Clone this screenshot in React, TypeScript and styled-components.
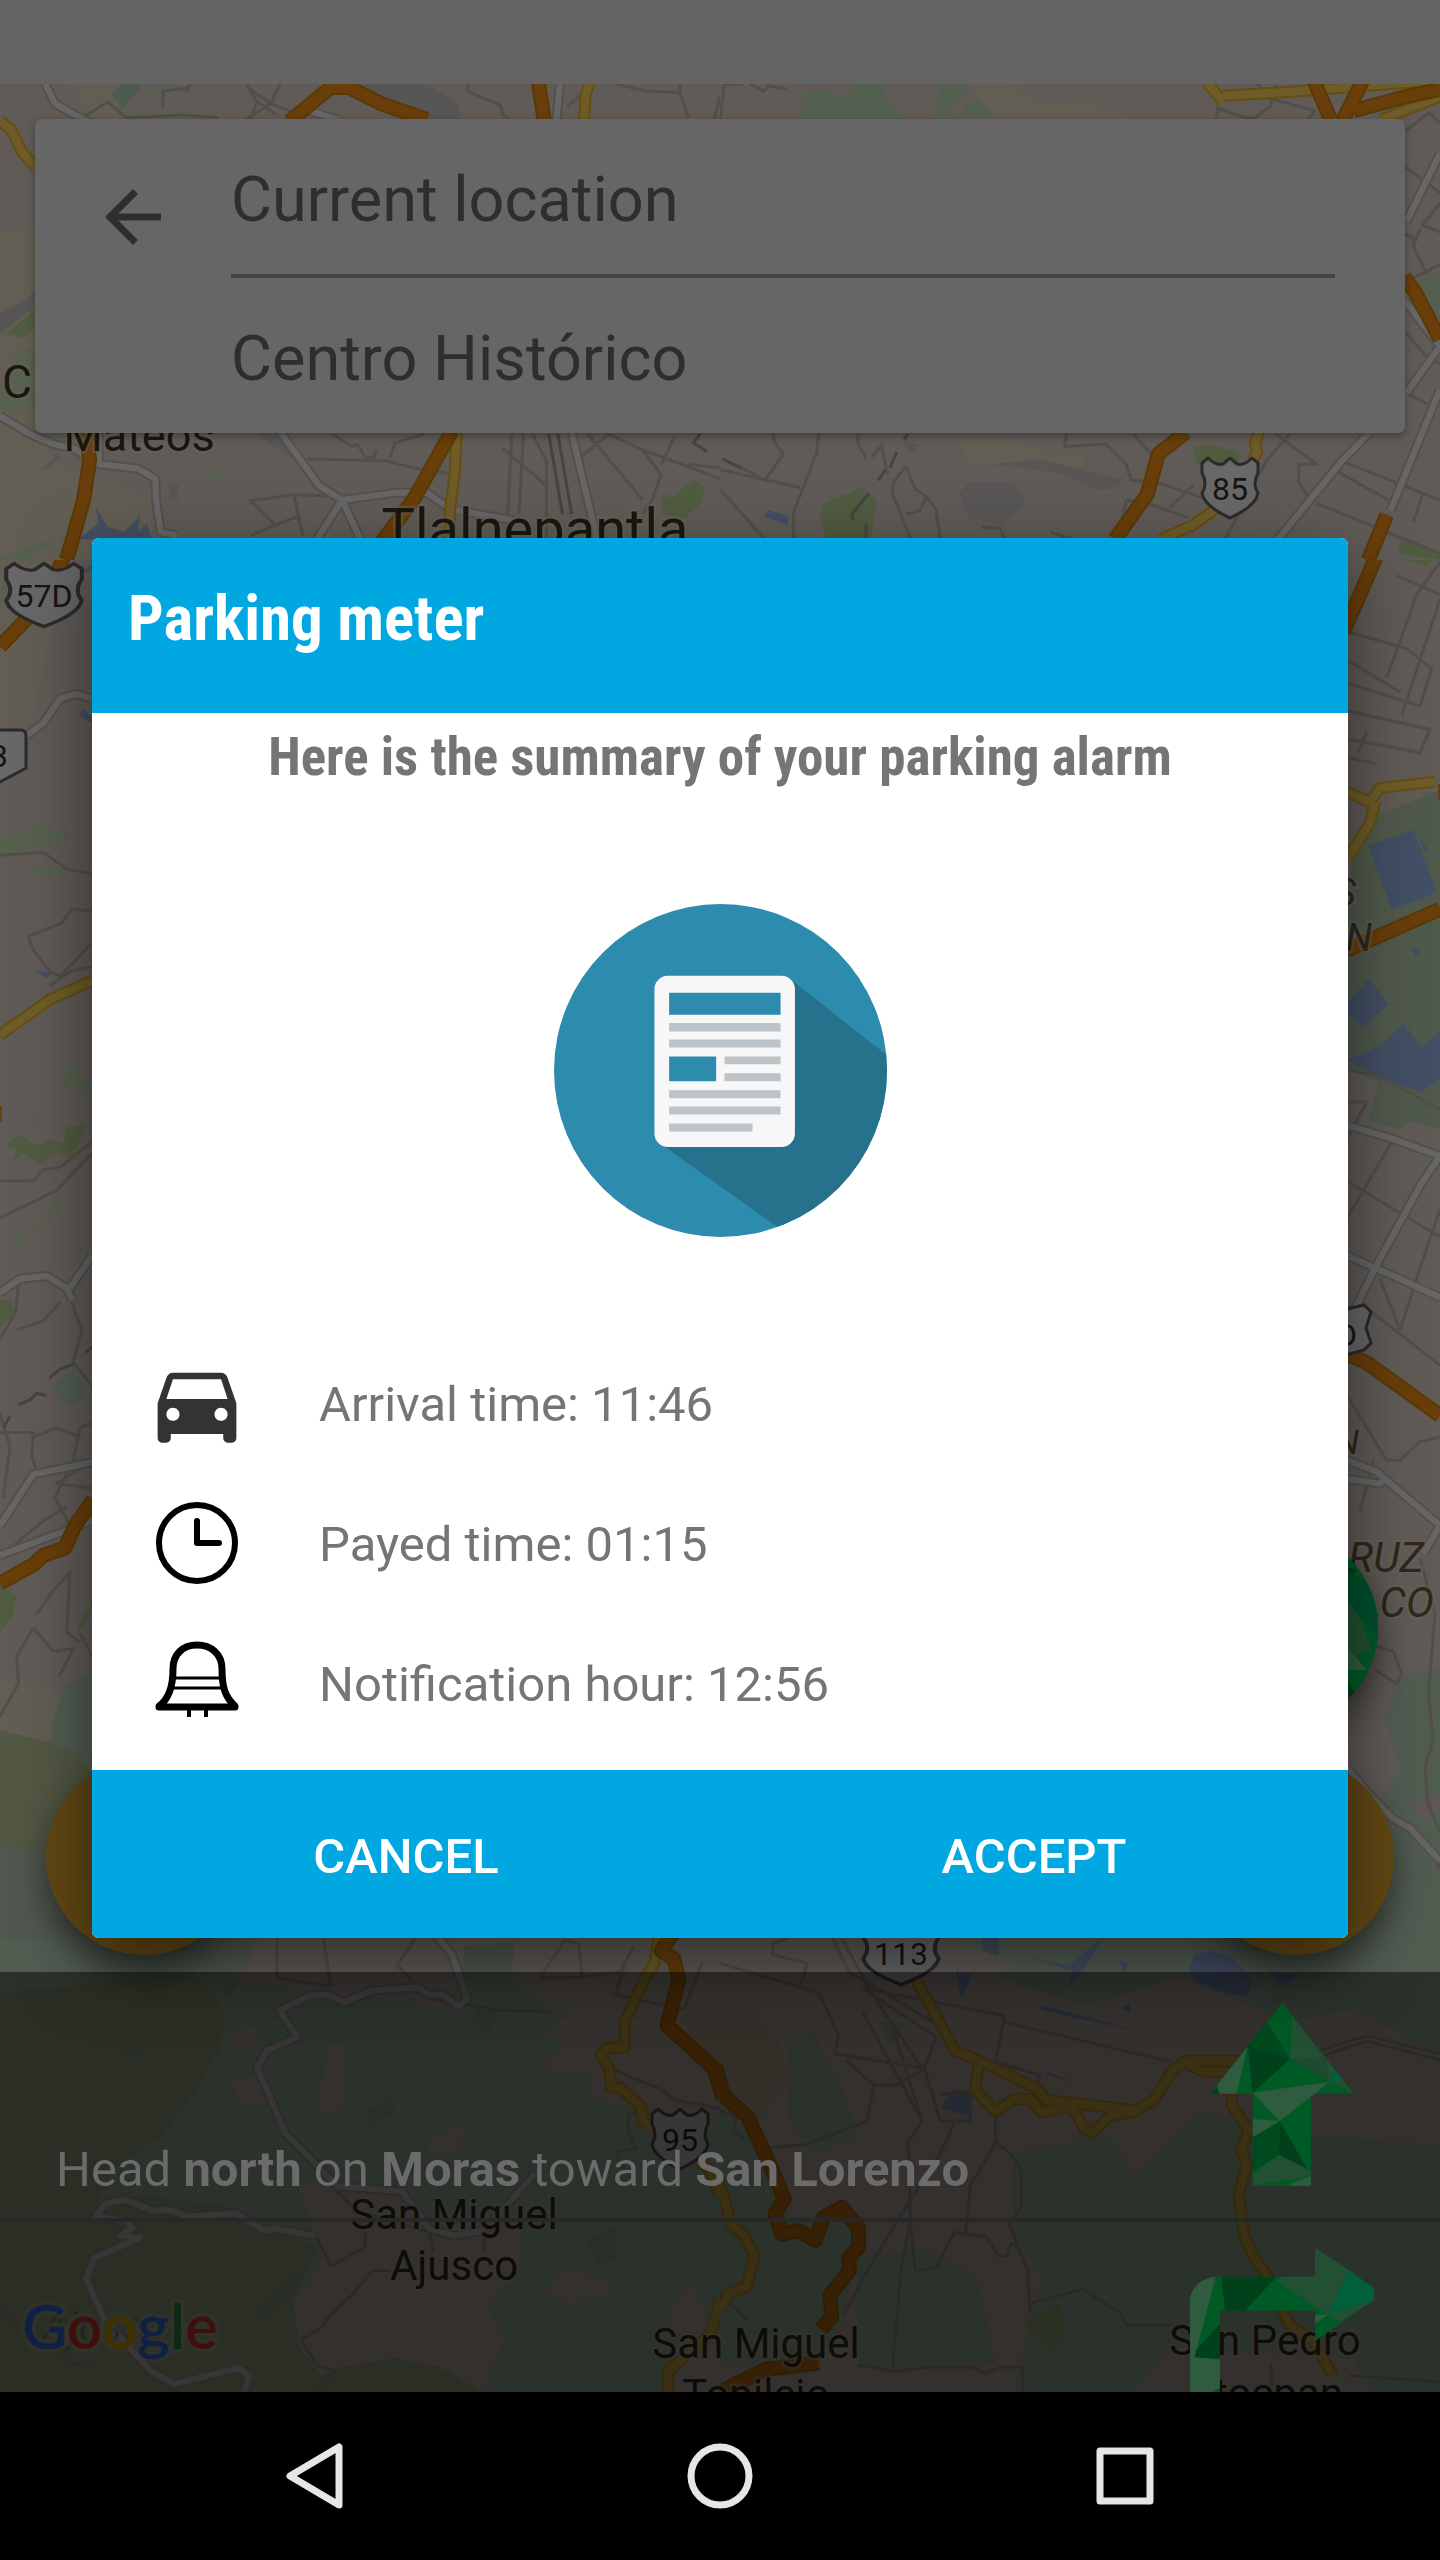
import React from "react";
import styled, { createGlobalStyle } from "styled-components";

const GlobalStyle = createGlobalStyle`
  *, *::before, *::after { box-sizing: border-box; }
  body { margin: 0; background: #000; font-family: Roboto, "Noto Sans", sans-serif; }
  button, input { font: inherit; border: 0; background: none; padding: 0; margin: 0; border-radius: 0; }
  button { cursor: pointer; }
  svg { display: block; }
`;

/* ---------- layout ---------- */

const Screen = styled.div`
  position: relative;
  display: flex;
  flex-direction: column;
  min-height: 100vh;
  overflow: hidden;
  background: #605b57;
`;

const MapLayer = styled.div`
  position: absolute;
  inset: 0;
  svg.map { width: 100%; height: auto; }
`;

const StatusBar = styled.div`
  position: relative;
  height: 84px;
  background: #646464;
`;

const SearchCard = styled.form`
  position: relative;
  display: flex;
  align-items: flex-start;
  margin: 35px;
  padding-right: 70px;
  border-radius: 7px;
  background: #666;
  box-shadow: 0 3px 9px rgba(0, 0, 0, 0.35);
`;

const BackButton = styled.button`
  flex: none;
  display: grid;
  place-items: center;
  width: 196px;
  height: 196px;
  svg { width: 84px; height: 84px; fill: #2e2e2e; }
`;

const Fields = styled.div`
  flex: 1;
  min-width: 0;
`;

const Field = styled.input<{ $ruled?: boolean }>`
  display: block;
  width: 100%;
  box-sizing: content-box;
  height: 76px;
  padding: 43px 0 36px;
  font-size: 63px;
  line-height: 76px;
  color: #2e2e2e;
  outline: none;
  ${(p) => p.$ruled && "border-bottom: 4px solid #444;"}
`;

const Actions = styled.div`
  position: relative;
  display: flex;
  flex-wrap: wrap;
  justify-content: space-between;
  row-gap: 33px;
  margin-top: auto;
  padding: 0 46px 17px;
`;

const GreenRow = styled.div`
  display: flex;
  justify-content: flex-end;
  width: 100%;
  padding-right: 16px;
`;

const Fab = styled.button<{ $color: string }>`
  width: 196px;
  height: 196px;
  border-radius: 50%;
  overflow: hidden;
  background: ${(p) => p.$color};
  box-shadow: 0 16px 32px rgba(0, 0, 0, 0.45);
  svg { width: 100%; height: 100%; }
`;

const Directions = styled.ol`
  position: relative;
  height: 420px;
  margin: 0;
  padding: 0;
  overflow: hidden;
  list-style: none;
  background: rgba(0, 0, 0, 0.47);
`;

const Step = styled.li`
  display: flex;
  align-items: flex-end;
  justify-content: space-between;
  height: 250px;
  padding: 0 66px 20px 56px;
  border-bottom: 4px solid #272727;
  font-size: 49px;
  line-height: 56px;
  color: #6b6b6b;
`;

const NextStep = styled(Step)`
  align-items: flex-start;
  justify-content: flex-end;
  padding-top: 26px;
  border: 0;
`;

const StepIcon = styled.div`
  display: flex;
  justify-content: center;
  width: 184px;
  padding-bottom: 12px;
`;

const NavBar = styled.nav`
  position: relative;
  display: flex;
  justify-content: center;
  height: 168px;
  background: #000;
`;

const NavButton = styled.button`
  display: grid;
  place-items: center;
  width: 405px;
  svg { width: 72px; height: 72px; fill: none; stroke: #e6e6e6; stroke-width: 7; stroke-linejoin: round; }
`;

/* ---------- dialog ---------- */

const Overlay = styled.div`
  position: absolute;
  inset: 84px 0 168px;
  display: grid;
  place-items: center;
`;

const Dialog = styled.section`
  display: flex;
  flex-direction: column;
  width: calc(100% - 184px);
  border-radius: 7px;
  overflow: hidden;
  background: #fff;
  box-shadow: 0 24px 70px rgba(0, 0, 0, 0.5);
`;

const DialogTitle = styled.h1`
  margin: 0;
  padding: 41px 36px 54px;
  background: #00a7e1;
  color: #fff;
  font-family: "Roboto Condensed", "Liberation Sans Narrow", Roboto, sans-serif;
  font-size: 63px;
  font-weight: 700;
  line-height: 80px;
`;

const Summary = styled.p`
  margin: 0;
  padding-top: 12px;
  text-align: center;
  color: #757575;
  font-family: "Roboto Condensed", "Liberation Sans Narrow", Roboto, sans-serif;
  font-size: 53px;
  font-weight: 700;
  line-height: 64px;
`;

const Badge = styled.div`
  display: flex;
  justify-content: center;
  padding: 115px 0 98px;
  svg { width: 333px; height: 333px; }
`;

const Details = styled.ul`
  margin: 0;
  padding: 0 63px 15px;
  list-style: none;
`;

const Detail = styled.li`
  display: flex;
  align-items: center;
  gap: 80px;
  height: 140px;
  color: #757575;
  font-size: 49px;
  line-height: 56px;
  svg { flex: none; width: 84px; height: 84px; overflow: visible; }
`;

const DialogActions = styled.footer`
  display: flex;
  background: #00a7e1;
`;

const DialogButton = styled.button`
  flex: 1;
  height: 168px;
  padding-top: 4px;
  color: #fff;
  font-size: 49px;
  font-weight: 500;
`;

/* ---------- map ---------- */

const roadStyle = {
  minor: { edge: "#524f4a", fill: "#524f4a", width: 3 },
  white: { edge: "#54514c", fill: "#666666", width: 10 },
  yellow: { edge: "#664e12", fill: "#6e5d28", width: 12 },
  orange: { edge: "#5a3a04", fill: "#693e0a", width: 15 },
  rail: { edge: "#444", fill: "#444", width: 3 },
};

type RoadKind = keyof typeof roadStyle;

interface TileData {
  x: number;
  y: number;
  w: number;
  h: number;
  box: string;
  areas: [string, string][];
  roads: [RoadKind, string][];
}

const forest = "#525d52";
const meadow = "#525844";
const park = "#505c40";
const water = "#434f64";
const stone = "#585655";
const land = "#605b57";
const sand = "#635e54";

const tiles: TileData[] = [
  {
    x: 0, y: 0, w: 720, h: 560, box: "0 0 1568 1568",
    areas: [
      [sand, "M0 650L80 640V1200L120 1290L330 1400V1568H0Z M150 230L270 235L260 335H200Z"],
      ["#4d5c4f", "M265 235H312L268 305L243 268Z"],
      ["#58604f", "M335 235H370L310 280Z M0 1080L40 970L76 980V1150L0 1150Z M450 1330L473 1305V1340L458 1362Z"],
      [stone, "M780 235H930L1000 290V335H880L800 290Z M0 880L76 820V860L0 935Z M368 1355H388V1400H368Z M95 1310L125 1270L130 1285L105 1315Z M560 1215H600L640 1290Z"],
      [park, "M15 935L76 865V920L50 945Z M1445 1380L1460 1395L1510 1345L1533 1365L1530 1405L1490 1450L1440 1440Z"],
      [water, "M170 1510L215 1465L208 1420L235 1475L270 1490L305 1445L300 1490L320 1465L330 1510Z"],
      ["#56604f", "M0 1568L60 1530L115 1510L110 1530L70 1550L60 1568Z"],
    ],
    roads: [
      ["minor", "M180 330L235 285L275 330L400 322L475 330 M355 300L355 255L415 245 M415 235L405 260 M535 235L560 285L545 335 M610 235L590 290L535 335 M545 250L590 290L660 325 M560 285L600 320 M1020 235L1018 255L1090 295L1095 320L1110 335 M1340 235L1410 255L1480 260V235 M1480 260L1500 330 M1568 270L1555 335 M1235 300L1290 235"],
      ["minor", "M725 1215L765 1250L780 1245L795 1282L815 1278L820 1260 M670 1285L840 1290L900 1310L975 1325 M850 1280L860 1240L925 1215 M1115 1215L1105 1450 M1140 1215L1130 1440 M640 1385L545 1402L600 1470L650 1445L640 1385 M650 1445L660 1500 M600 1470L545 1500 M1095 1255L1190 1360V1510 M1160 1215L1190 1290V1360 M1280 1215L1400 1400 M1265 1280L1325 1215L1400 1260L1568 1340 M1400 1260L1440 1330L1420 1400L1400 1440 M1500 1300L1568 1310 M1470 1220L1440 1300 M750 1390L640 1385"],
      ["rail", "M1195 1215L1225 1440 M1215 1215L1245 1440 M1525 1215L1510 1240L1540 1265"],
      ["white", "M95 225L120 290L175 330L200 345 M1220 225L1212 335 M650 300L735 335 M0 1165L65 1215L120 1245L160 1255L215 1300L300 1312L338 1340L340 1400L350 1490L385 1500 M215 1300V1205 M605 1200L695 1360L745 1400L860 1380L930 1380L980 1425L1130 1460 M745 1400L690 1510 M745 1400L785 1510 M1243 1200L1300 1510"],
      ["yellow", "M0 338L25 365L50 430L80 470 M1285 225L1275 270L1272 335 M995 1205L990 1330L980 1430V1510"],
      ["orange", "M630 340L720 245H760L830 290L930 335 M1172 225L1185 335 M190 1205L195 1290L182 1400L145 1568 M985 1205L900 1400L830 1520"],
    ],
  },
  {
    x: 720, y: 0, w: 720, h: 560, box: "0 0 1568 1568",
    areas: [
      ["#54604f", "M180 262L205 248L240 262L285 270V235H355L358 265L402 335H180Z M480 240H545L490 335H465Z M530 290L570 280L610 330H530Z M700 325L725 280L738 295L730 330Z"],
      [sand, "M540 235H640L690 290L830 295L900 335H600Z M520 1230L605 1220L700 1260L800 1260L790 1310L540 1300Z"],
      ["#54604f", "M1515 790L1568 760V900Z"],
      [park, "M1030 1255L1060 1243L1130 1265V1300H1040Z M225 1410L310 1365L340 1400L330 1510H230L218 1450Z M1485 1510L1568 1550V1568L1475 1550Z"],
      [stone, "M520 1380L545 1350L640 1350L665 1410L610 1470L540 1450Z M590 1300L700 1285L800 1320L870 1340L883 1320L870 1360L830 1375L740 1325Z M395 1235L435 1245L415 1270Z"],
      [water, "M105 1427L148 1445V1470L95 1447Z"],
    ],
    roads: [
      ["minor", "M0 335L10 235H50 M65 235L95 255L105 240L145 250 M1080 335L1085 305L1145 330H1165L1200 295L1210 235 M1170 235L1195 275L1295 310L1280 335 M1495 365L1545 315L1568 345 M1490 465L1568 540 M1568 570L1530 630L1568 650 M1510 690L1540 770 M1490 655L1510 665V690L1525 640 M1500 785L1568 740 M1490 925L1540 1000L1568 1020 M1500 1105L1540 1130 M1145 330L1080 300"],
      ["minor", "M215 1215L210 1270L160 1435V1510 M115 1215L120 1240L138 1270L98 1345L40 1305 M0 1315L175 1365 M300 1215V1240L318 1285 M330 1280L352 1248L365 1330 M405 1305L378 1350L375 1380L415 1510 M405 1305L425 1370L450 1390L470 1425L480 1510 M450 1390L435 1430L405 1440 M0 1370L98 1510 M755 1215L750 1250L840 1243L885 1300L895 1345L950 1350L1090 1410 M900 1215L945 1280 M885 1400L945 1415L1020 1450 M885 1400L865 1510 M980 1420L1030 1360 M570 1475L610 1480L620 1510 M720 1490L770 1510 M1240 1215L1190 1290L1130 1430 M1210 1215L1300 1300L1260 1300V1350L1280 1390L1345 1320L1455 1400 M1350 1290L1480 1355L1568 1400 M1300 1410L1568 1550 M1530 1385L1510 1460 M1150 1390L1100 1510"],
      ["rail", "M5 1285L45 1310 M410 1215L400 1230 M385 1265L370 1310 M360 1315L345 1345 M325 1380L287 1440L290 1455 M318 1468V1505"],
      ["white", "M1568 430L1495 620 M1490 840L1568 970L1495 1100 M1568 1090L1460 1430 M1415 1210L1355 1290L1215 1510"],
      ["yellow", "M1060 230L1095 285 M1095 268L1230 258L1568 225 M1440 335L1568 270 M1175 1205L1165 1240L1170 1265L1160 1290 M1085 1420L1030 1470L960 1510"],
      ["orange", "M1293 225L1330 335 M1400 225L1355 340 M1380 310L1480 275L1568 250 M1490 775L1515 820L1568 950 M1015 1210L955 1270L930 1385L860 1510 M1452 1442L1412 1568"],
    ],
  },
  {
    x: 0, y: 560, w: 100, h: 1378, box: "0 43 300 1480",
    areas: [
      [sand, "M0 40L200 40L100 210L0 260Z M0 1240L180 1260L300 1240V1480H0Z"],
      ["#55604d", "M0 340L90 335L130 320L140 333L210 332L200 345L110 352L0 360Z M90 375L150 372L210 382L100 380Z M180 595L235 583L240 600L265 603L275 625L230 605L190 612Z M65 645L130 638L110 650Z M25 790L60 770L45 763L80 766L190 730L170 742L90 765L55 785Z M0 75L50 50L60 65L0 92Z"],
      [park, "M15 672L55 660L115 672L150 665L190 670L200 652L260 650L215 685L170 678L120 692L70 680L30 692L50 677Z M0 838H30L50 852L0 866Z M0 1145L50 1155L40 1175L0 1195Z M230 1190L276 1160V1172L235 1196Z"],
      [forest, "M150 930L215 913L265 930L240 948L200 952Z M160 1290L190 1255L276 1235V1340L150 1320Z"],
      [meadow, "M0 1300L140 1312L240 1325L300 1360V1450L0 1425Z"],
      ["#525850", "M0 1425L300 1440V1523H0Z"],
      [water, "M235 210L250 203L276 212V218Z M108 485L160 486L140 492Z M240 58L276 48V54Z"],
    ],
    roads: [
      ["minor", "M0 360L130 357L200 375L276 380 M276 420L215 418L185 433L85 447L100 462L150 485L180 490L276 455 M276 480L210 485L150 500 M0 710H100L130 698L180 695L276 668 M0 750L170 720L276 680 M55 820L48 850L0 880 M200 825L245 870L220 905L276 930 M180 840L130 860L50 870 M0 980H100L95 1005L110 1022 M0 960L30 995L10 1050 M276 970L240 975L220 1010L165 1050L210 1080 M100 985L170 975L240 985 M276 1040L170 1035L276 1010 M45 1100L130 1075L200 1060 M110 1175L160 1150L210 1130L200 1195L240 1205 M100 1190L50 1220L55 1250L0 1285 M100 1190L160 1215L220 1212L176 1243 M276 1220L240 1195"],
      ["rail", "M10 975L30 963 M55 950L90 945L110 938L138 940 M148 922L180 912L220 907 M258 894L276 888"],
      ["white", "M80 232L130 218L180 192L230 187L276 192 M0 830L60 815L140 812L200 825L218 838 M210 825L276 790 M0 1080L100 1025L276 1012 M0 1112L276 1075"],
      ["yellow", "M0 553L150 515L276 495"],
      ["orange", "M240 -10L190 40L150 80L0 136 M280 1052L225 1080L195 1104L130 1112L100 1122L0 1142 M0 638H4"],
    ],
  },
  {
    x: 1300, y: 560, w: 140, h: 1378, box: "0 43 420 1480",
    areas: [
      ["#505a4c", "M141 385L210 320L420 290V635L141 588Z M205 645L235 605L420 630V655L330 645L300 655Z"],
      [water, "M205 350L340 333L410 400L275 418Z M141 520L207 492L265 520L190 545L141 530Z M141 580L240 565L310 541L365 565L390 560L420 548V600L365 615L240 600Z M355 337L385 355L375 358Z M335 458L365 463L345 470Z"],
      [forest, "M250 1285L310 1240L420 1235V1523H141V1505L270 1480L200 1400L300 1340Z"],
      [park, "M295 28L400 43L380 50L290 40Z"],
      ["#5d5854", "M330 1380L420 1365V1385L380 1400Z"],
    ],
    roads: [
      ["minor", "M141 120L320 138L395 160L360 200L141 175 M420 85L305 210 M260 170L350 80L420 45 M141 150L300 185 M141 205L390 225L360 250L141 235 M200 228L175 250 M141 255L230 262 M290 60L420 80 M141 590L240 598L420 633 M141 625L200 625L141 665 M275 668L141 750 M141 710L420 770 M141 845L220 852L420 908 M300 870L345 820L420 740 M240 815L300 870 M141 940L260 1010L300 1010L360 990L420 985 M180 1065L220 1010 M360 1115L405 1175L385 1260L400 1310L375 1340L385 1380L420 1410 M190 1205L280 1215L305 1240L290 1250L225 1235 M141 1375L260 1395L380 1420L420 1450"],
      ["white", "M141 650L280 665L420 683 M420 683L360 715L230 800L141 865 M141 790L280 812L420 835 M141 1010L230 1022L255 1030L240 1035L141 1030 M255 1030L420 1080L370 1110 M141 1340L210 1370L280 1395L330 1405L420 1440"],
      ["yellow", "M141 292L210 303L240 288L405 281 M141 365L210 325L225 303"],
      ["orange", "M130 120L180 80L275 0 M141 462L420 418 M141 896L200 905L420 962 M415 292H425"],
    ],
  },
  {
    x: 0, y: 1938, w: 720, h: 454, box: "0 90 1568 1079",
    areas: [
      [forest, "M0 90H1568V1169H0Z"],
      [meadow, "M0 220L200 200L420 170L490 260L480 350L430 450L350 560L250 640L200 740L300 700L500 730L690 830L640 950L650 1050L740 1110L860 1088L960 1110L1050 1169H0Z"],
      [land, "M560 90H1568V510L1440 520L1290 470L1285 420L1170 400L1230 340L1190 320L1240 270L1130 210L1110 140L1010 130L1000 200L950 270L880 220L740 240L600 200L500 200L540 150Z M500 430L560 420L580 480L530 500Z M490 320L560 300L560 350L510 360Z M715 340L755 340V430L745 490L715 510L690 490Z M650 680L700 650L780 700L900 670L900 760L1140 740L1130 880L1060 960L1100 1040L1050 1169L960 1110L860 1088L740 1110L700 1130L650 1060L640 960L700 850Z M930 570L990 530L1020 540L1000 590L930 620Z M1200 910L1240 870L1330 910L1320 940L1240 960L1190 930Z M1480 940L1500 900L1530 950L1540 1000L1568 1050V1169H1440L1490 1040L1450 1000Z M1135 1050L1150 1030L1165 1055Z"],
      ["#62584f", "M1480 270L1568 250V400L1540 390Z"],
      ["#4e5a4c", "M1010 110L1120 100L1110 200H1010Z M1090 270L1040 255L1030 290L1060 325Z M1280 810L1340 780V850L1300 870Z M800 500L850 465L860 500L810 540Z"],
      ["#4b5344", "M560 980L660 880L640 940L580 990Z M480 210L520 190L500 230Z M260 370L330 320L300 370Z"],
    ],
    roads: [
      ["minor", "M603 90V185L720 205 M705 90L720 205 M905 90L865 155L935 235L1090 262L1200 265 M1230 95L1175 185L1268 183L1260 105Z M1268 183L1350 170L1380 110 M1340 225L1365 140 M1340 225L1490 260L1530 145 M1340 405L1440 450L1470 475L1568 495 M1420 508H1368V550L1385 590L1340 600L1360 640 M730 690L780 740L935 790L945 840 M720 870L795 825V790 M690 800L720 870 M850 880H810L770 935L720 985L700 1015L655 1045L690 1105L730 1120L690 1160 M1055 840V800 M0 975L160 1100L200 1110"],
      ["white", "M948 80L985 130L1018 235L998 252L965 225H935L908 207L810 215L750 243L715 225L675 227L608 262L648 325L582 357L560 398L622 555L735 680L875 692L935 780L990 798L1055 785L1165 650 M683 798L600 780L575 785L515 745L410 752L365 735L335 738L270 712L228 722L210 752L278 763L288 780L262 798L305 803L205 850L188 900L228 1000L330 1120L378 1150L520 1112L543 1130L530 1175"],
      ["yellow", "M1435 85L1425 150L1405 185L1360 290V350H1325L1308 367L1325 395L1332 445H1350L1395 490L1402 525L1440 550L1545 640L1568 700 M1568 950L1548 1030L1455 1120V1175"],
      ["orange", "M1465 80L1440 120L1468 140L1478 190L1453 298L1555 400L1575 470"],
    ],
  },
  {
    x: 720, y: 1938, w: 720, h: 454, box: "0 90 1568 1079",
    areas: [
      [land, "M0 90H700V170L900 180L1210 270L1300 230L1568 300V500L1400 520L1290 480L1100 640L1000 700L950 600L700 560L640 720L680 900L640 1080L620 1169H0V800L200 700L150 520L150 270L0 250Z"],
      [forest, "M480 90H1568V370L1380 260L1240 290L1000 180L800 250L620 190Z M150 350L200 310L260 430L300 560L200 600L150 520Z M0 480L120 620L120 740L300 780L270 1000L200 1100H0Z M640 600L850 560L900 660L1050 500L1230 560L1568 580V1169H1420L1380 1090L980 1060L900 1169H640L700 900L640 790Z M300 850L450 830L560 900L600 1100L300 1110Z"],
      ["#62584f", "M0 240L65 235L130 340L145 430L90 520L30 500L0 410Z"],
      [park, "M345 290L400 290L375 345Z M660 1000L740 960L755 1050L720 1070Z"],
      [water, "M570 90H608L605 130L590 150L572 140Z M520 120L545 150V190L525 235L515 175Z M685 140L760 155L832 90L800 150L755 215L770 170Z M870 140L888 150L880 180Z M1022 165L1035 130L1068 120L1120 140L1160 190L1150 225L1110 225L1030 190Z M1195 172L1260 178L1225 208Z M695 250L760 265L905 310L700 262Z M510 448L553 458L540 513L480 495Z M708 405L775 435L715 415Z M875 255L893 245V265Z"],
      [land, "M500 90L570 120L650 150L600 185L520 170Z M1400 790L1435 780L1420 808Z"],
    ],
    roads: [
      ["minor", "M0 150L215 220L258 320L250 365L445 400L470 325L310 210 M265 90L330 220L440 400 M245 90L280 170L480 300 M145 90L115 105V130L190 150L175 205 M310 210L480 245L620 275L600 385L695 415L690 450 M620 290L985 385 M310 265L440 525L410 575L415 770L425 880L470 875L510 790L580 800L605 845H625L635 815L655 830 M275 380L335 440H385L445 400L480 525H545V460L480 460 M600 500V575L635 605L655 640V730L630 770L670 880L675 980 M600 575L545 680L535 790 M440 525L375 300 M415 760L395 870L375 1120 M510 530L480 600L410 720L310 900L270 985 M100 590L190 580L320 525L335 440 M0 500L35 515L30 550L60 570 M670 960L790 925L870 980L885 1010L1000 1010 M300 1105L380 1120L450 1110H550L580 1125L610 1110H660V1169 M0 930L60 1000 M1370 1130L1568 1145 M1200 1100V1169 M1310 370L1410 335L1568 380 M1310 355L1410 322L1568 365"],
      ["yellow", "M425 185L512 358L565 382L690 448L710 475L905 500L945 475L985 405L1015 382H1135 M1020 390L1055 408H1120 M565 382L555 450L600 503L640 473H675L700 505L765 490L795 545L812 553L850 512L905 503 M1115 440V490L1152 545L1135 595L1148 630L1130 695L1140 790L1160 845L1190 890L1240 1010L1290 1045L1335 1130 M-10 640L25 770L55 800L75 845L58 918L20 935L0 975"],
      ["orange", "M-10 395L8 465L60 515L105 620L140 710L120 745L135 795L170 785L208 808L225 755L265 730L302 780V825L280 850L282 880L240 938L243 990L220 1020 M215 1100L100 1115L-10 1175"],
    ],
  },
];

const MapTile = ({ tile }: { tile: TileData }) => (
  <svg x={tile.x} y={tile.y} width={tile.w} height={tile.h} viewBox={tile.box} preserveAspectRatio="none">
    {tile.areas.map(([fill, d], i) => (
      <path key={i} d={d} fill={fill} />
    ))}
    <g fill="none" strokeLinejoin="round">
      {tile.roads.map(([kind, d], i) => {
        const s = roadStyle[kind];
        return (
          <g key={i}>
            <path d={d} stroke={s.edge} strokeWidth={s.width} vectorEffect="non-scaling-stroke" />
            {s.edge !== s.fill && (
              <path d={d} stroke={s.fill} strokeWidth={s.width - 4} vectorEffect="non-scaling-stroke" />
            )}
          </g>
        );
      })}
    </g>
  </svg>
);

const Shield = ({ x, y, label, wide }: { x: number; y: number; label: string; wide?: boolean }) => (
  <g transform={`translate(${x} ${y})`}>
    <path
      transform={wide ? "scale(1.35 1.05)" : undefined}
      d="M-28-25L-22-30Q-14-22-7-24L0-30L7-24Q14-22 22-30L28-25V-15Q22-4 28 5Q26 18 0 30Q-26 18-28 5Q-22-4-28-15Z"
      fill="#686868"
      stroke="#2b2b2b"
      strokeWidth="3"
      strokeLinejoin="round"
    />
    <text y="12" textAnchor="middle" fontSize="32" fill="#151515">{label}</text>
  </g>
);

const places: { x: number; y: number; size: number; name: string }[] = [
  { x: 17, y: 398, size: 46, name: "C" },
  { x: 139, y: 451, size: 45, name: "Mateos" },
  { x: 535, y: 548, size: 56, name: "Tlalnepantla" },
  { x: 454, y: 2229, size: 42, name: "San Miguel" },
  { x: 454, y: 2280, size: 42, name: "Ajusco" },
  { x: 756, y: 2358, size: 42, name: "San Miguel" },
  { x: 756, y: 2409, size: 42, name: "Topilejo" },
  { x: 1265, y: 2355, size: 42, name: "San Pedro" },
  { x: 1265, y: 2408, size: 42, name: "Atocpan" },
];

const districts: { x: number; y: number; size: number; name: string }[] = [
  { x: 1356, y: 906, size: 38, name: "S" },
  { x: 1372, y: 951, size: 38, name: "N" },
  { x: 1359, y: 1454, size: 34, name: "N" },
  { x: 1424, y: 1572, size: 42, name: "CRUZ" },
  { x: 1434, y: 1617, size: 42, name: "LCO" },
];

const googleLetters: [string, string][] = [
  ["G", "#1f3c80"], ["o", "#7a1d18"], ["o", "#7a5c00"], ["g", "#1f3c80"], ["l", "#164f24"], ["e", "#7a1d18"],
];

const CityMap = () => (
  <svg className="map" viewBox="0 0 1440 2560" role="img" aria-label="Map">
    <rect width="1440" height="2560" fill={land} />
    {tiles.map((tile) => (
      <MapTile key={`${tile.x}-${tile.y}`} tile={tile} />
    ))}
    <Shield x={44} y={595} label="57D" wide />
    <Shield x={1230} y={488} label="85" />
    <Shield x={680} y={2139} label="95" />
    <Shield x={901} y={1953} label="113" wide />
    <g>
      <path d="M-4 730H21Q26 730 26 736V768L-4 784Z" fill="#686868" stroke="#2b2b2b" strokeWidth="3" />
      <text x="8" y="767" fontSize="32" textAnchor="end" fill="#151515">3</text>
      <path d="M1335 1312L1364 1305L1371 1312L1366 1328L1371 1343L1364 1350L1335 1358Z" fill="#686868" stroke="#2b2b2b" strokeWidth="3" />
      <text x="1357" y="1346" fontSize="32" textAnchor="end" fill="#151515">D</text>
    </g>
    <g fill="#1a170e" stroke="#66615a" strokeOpacity="0.5" strokeWidth="5" paintOrder="stroke" textAnchor="middle">
      {places.map((p) => (
        <text key={p.name + p.x + p.y} x={p.x} y={p.y} fontSize={p.size}>{p.name}</text>
      ))}
    </g>
    <g fill="#2f281b" fontStyle="italic" stroke="#66615a" strokeOpacity="0.5" strokeWidth="5" paintOrder="stroke" textAnchor="end">
      {districts.map((p) => (
        <text key={p.name + p.y} x={p.x} y={p.y} fontSize={p.size}>{p.name}</text>
      ))}
    </g>
    <text x="42" y="2341" fontSize="42" fontStyle="italic" fill="#3b4a3a">Ajusco</text>
    <text
      x="22" y="2349" fontSize="62" fontFamily="Lato, sans-serif" fontWeight="600"
      stroke="#66665c" strokeOpacity="0.5" strokeWidth="8" paintOrder="stroke" strokeLinejoin="round"
    >
      {googleLetters.map(([letter, color], i) => (
        <tspan key={i} fill={color}>{letter}</tspan>
      ))}
    </text>
  </svg>
);

/* ---------- icons ---------- */

const StraightIcon = () => (
  <svg width="144" height="183" viewBox="0 0 314 434" preserveAspectRatio="none" role="img" aria-label="Straight">
    <path fill="#005a26" d="M158 0L314 215H220V434H93V215H0Z" />
    <path fill="#00401b" d="M82 100L175 133L93 213Z M152 280L220 408L150 360Z M18 196L24 215H0Z" />
    <path fill="#00481f" d="M124 45L175 133L82 100Z" />
    <path fill="#235033" d="M178 30L314 215L175 133Z M93 408L150 360L220 398V410L93 432Z" />
    <path fill="#004a20" d="M93 318L152 280L150 360L93 400Z" />
    <path fill="#005a26" d="M158 0L124 45L175 133L178 30Z M175 133L262 187L93 213Z" />
    <path fill="#1f4a31" d="M175 133L250 128L262 187Z" />
    <path fill="#00603c" d="M270 158L290 182L262 187Z" />
    <path fill="#2f5c3e" d="M82 104L58 215H20L15 195Z M93 213L262 187L152 280Z M93 275L152 280L93 318Z M170 432L220 410V434Z" />
  </svg>
);

const TurnRightIcon = () => (
  <svg width="184" height="144" viewBox="0 0 400 341" preserveAspectRatio="none" role="img" aria-label="Turn right">
    <path fill="#005a26" d="M0 341V120Q8 75 56 68H272V0L400 95V123L272 220V148H65V341Z" />
    <path fill="#00401b" d="M68 68H188L120 148H76Z M0 258L65 262V180Z" />
    <path fill="#235033" d="M188 78L200 68H272V0L345 52L300 158Z M300 158L400 123L325 175Z" />
    <path fill="#00603c" d="M345 52L400 95V123L300 158Z" />
    <path fill="#2f5c3e" d="M0 120Q8 75 56 68L10 258H0Z M0 258L65 264V330L50 341H0Z M272 158L300 158L272 178Z" />
  </svg>
);

const GreenFacets = () => (
  <svg viewBox="0 0 196 196" preserveAspectRatio="none" aria-hidden="true">
    <path fill="#005a26" d="M0 0H196V196H0Z" />
    <path fill="#00401b" d="M120 20L175 40L150 75L100 60Z M150 120L176 170L120 190Z" />
    <path fill="#235033" d="M100 85L165 55L190 120L150 135Z" />
    <path fill="#00502e" d="M130 20L196 60V110L165 70Z" />
    <path fill="#2f5c3e" d="M155 105L185 140L135 140Z" />
  </svg>
);

const DocumentIcon = () => (
  <svg viewBox="101 73 998 998" role="img" aria-label="Summary">
    <clipPath id="disc"><circle cx="600" cy="572" r="499" /></clipPath>
    <circle cx="600" cy="572" r="499" fill="#2d8bad" />
    <path clipPath="url(#disc)" fill="#26718c" d="M815 303L1110 535V1080H826L432 800Z" />
    <rect x="402" y="288" width="421" height="513" rx="40" fill="#f7f7f7" />
    <path fill="#2d8bad" d="M446 339H780V405H446Z M446 530H587V604H446Z" />
    <path fill="#bdc3c7" d="M446 430H780V455H446Z M446 479H780V503H446Z M612 530H780V553H612Z M612 580H780V604H612Z M446 631H780V655H446Z M446 680H780V704H446Z M446 731H696V755H446Z" />
  </svg>
);

const CarIcon = () => (
  <svg viewBox="2.4 2.8 19.2 19.2" aria-hidden="true">
    <path
      fill="#333"
      d="M18.92 6.01C18.72 5.42 18.16 5 17.5 5h-11c-.66 0-1.21.42-1.42 1.01L3 12v8c0 .55.45 1 1 1h1c.55 0 1-.45 1-1v-1h12v1c0 .55.45 1 1 1h1c.55 0 1-.45 1-1v-8l-2.08-5.99zM6.5 16c-.83 0-1.5-.67-1.5-1.5S5.67 13 6.5 13s1.5.67 1.5 1.5S7.33 16 6.5 16zm11 0c-.83 0-1.5-.67-1.5-1.5s.67-1.5 1.5-1.5 1.5.67 1.5 1.5-.67 1.5-1.5 1.5zM5 11l1.5-4.5h11L19 11H5z"
    />
  </svg>
);

const ClockIcon = () => (
  <svg viewBox="0 0 84 84" fill="none" stroke="#000" strokeWidth="6" strokeLinecap="round" strokeLinejoin="round" aria-hidden="true">
    <circle cx="42" cy="40" r="38" />
    <path d="M42 18V40H64" />
  </svg>
);

const BellIcon = () => (
  <svg viewBox="0 0 84 84" fill="none" stroke="#000" strokeLinejoin="round" aria-hidden="true">
    <path strokeWidth="7" d="M18 26C18 11 28 2 42 2S67 11 67 26C67 44 70 54 80 63V64H4V63C14 56 18 44 18 26Z" />
    <path strokeWidth="3" d="M18 35H66M17 45H67" />
    <path strokeWidth="4" d="M34 66V74M51 66V74" />
  </svg>
);

/* ---------- page ---------- */

const details = [
  { Icon: CarIcon, text: "Arrival time: 11:46" },
  { Icon: ClockIcon, text: "Payed time: 01:15" },
  { Icon: BellIcon, text: "Notification hour: 12:56" },
];

export default function App() {
  return (
    <>
      <GlobalStyle />
      <Screen>
        <MapLayer>
          <CityMap />
        </MapLayer>
        <StatusBar />
        <SearchCard>
          <BackButton type="button" aria-label="Back">
            <svg viewBox="0 0 24 24">
              <path d="M20 11H7.83l5.59-5.59L12 4l-8 8 8 8 1.41-1.41L7.83 13H20v-2z" />
            </svg>
          </BackButton>
          <Fields>
            <Field $ruled aria-label="Origin" defaultValue="Current location" />
            <Field aria-label="Destination" defaultValue="Centro Histórico" />
          </Fields>
        </SearchCard>
        <Actions>
          <GreenRow>
            <Fab type="button" aria-label="Navigate" $color="#005a26">
              <GreenFacets />
            </Fab>
          </GreenRow>
          <Fab type="button" aria-label="Parking" $color="#624814" />
          <Fab type="button" aria-label="Alarm" $color="#624814" />
        </Actions>
        <Directions>
          <Step>
            <span>
              Head <b>north</b> on <b>Moras</b> toward <b>San Lorenzo</b>
            </span>
            <StepIcon>
              <StraightIcon />
            </StepIcon>
          </Step>
          <NextStep>
            <StepIcon>
              <TurnRightIcon />
            </StepIcon>
          </NextStep>
        </Directions>
        <NavBar>
          <NavButton type="button" aria-label="Back">
            <svg viewBox="0 0 72 72"><path d="M60 7V65L11 36Z" /></svg>
          </NavButton>
          <NavButton type="button" aria-label="Home">
            <svg viewBox="0 0 72 72"><circle cx="36" cy="36" r="29" /></svg>
          </NavButton>
          <NavButton type="button" aria-label="Recent apps">
            <svg viewBox="0 0 72 72"><rect x="11" y="11" width="50" height="50" /></svg>
          </NavButton>
        </NavBar>
        <Overlay>
          <Dialog role="dialog" aria-labelledby="dialog-title">
            <DialogTitle id="dialog-title">Parking meter</DialogTitle>
            <Summary>Here is the summary of your parking alarm</Summary>
            <Badge>
              <DocumentIcon />
            </Badge>
            <Details>
              {details.map(({ Icon, text }) => (
                <Detail key={text}>
                  <Icon />
                  <span>{text}</span>
                </Detail>
              ))}
            </Details>
            <DialogActions>
              <DialogButton type="button">CANCEL</DialogButton>
              <DialogButton type="button">ACCEPT</DialogButton>
            </DialogActions>
          </Dialog>
        </Overlay>
      </Screen>
    </>
  );
}
